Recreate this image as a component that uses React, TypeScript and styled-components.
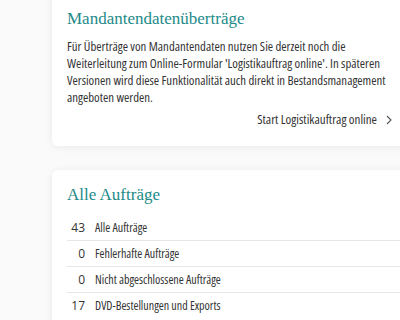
import React from "react";
import styled, { createGlobalStyle } from "styled-components";

const GlobalStyle = createGlobalStyle`
  html, body { margin: 0; padding: 0; background: #fafafa; overflow: hidden; }
  body { font-family: "Open Sans", "Noto Sans", sans-serif; color: #333; }
`;

const Page = styled.main`
  display: flex;
  flex-direction: column;
  gap: 24px;
  padding-left: 52px;
  margin-right: -12px;
  margin-top: -12px;
`;

const Card = styled.section<{ $top: number }>`
  background: #fff;
  border-radius: 6px;
  box-shadow: 0 1px 8px rgba(0, 0, 0, 0.07);
  padding: ${(p) => p.$top}px 20px 18px 15px;
`;

const Title = styled.h2`
  margin: 0;
  font-family: "Liberation Serif", "DejaVu Serif", serif;
  font-weight: normal;
  font-size: 17px;
  line-height: 22px;
  color: #238a89;
`;

const Text = styled.p`
  margin: 8px 0 0;
  font-size: 12.8px;
  font-stretch: 75%;
  line-height: 17px;
  color: #333;
`;

const LinkRow = styled.div`
  display: flex;
  justify-content: flex-end;
  align-items: center;
  gap: 9px;
  margin-top: 5px;
`;

const Link = styled.a`
  font-size: 13px;
  font-stretch: 75%;
  line-height: 17px;
  color: #333;
  text-decoration: none;
`;

const List = styled.ul`
  list-style: none;
  margin: 9px -20px 0 0;
  padding: 0;
`;

const Row = styled.li`
  display: flex;
  align-items: center;
  height: 25px;
  & + & {
    border-top: 1px solid #e6e6e6;
  }
`;

const Count = styled.span`
  width: 18px;
  text-align: right;
  font-size: 12px;
  color: #333;
  flex: none;
`;

const Label = styled.span`
  margin-left: 10px;
  font-size: 12px;
  font-stretch: 75%;
  color: #333;
`;

const Chevron = () => (
  <svg width="6" height="10" viewBox="0 0 6 10" aria-hidden="true">
    <polyline points="1,1 5,5 1,9" fill="none" stroke="#555" strokeWidth="1.1" />
  </svg>
);

const rows = [
  { n: 43, label: "Alle Aufträge" },
  { n: 0, label: "Fehlerhafte Aufträge" },
  { n: 0, label: "Nicht abgeschlossene Aufträge" },
  { n: 17, label: "DVD-Bestellungen und Exports" },
];

export default function App() {
  return (
    <>
      <GlobalStyle />
      <Page>
        <Card $top={20}>
          <Title>Mandantendatenüberträge</Title>
          <Text>
            Für Überträge von Mandantendaten nutzen Sie derzeit noch die Weiterleitung zum
            Online-Formular 'Logistikauftrag online'. In späteren Versionen wird diese
            Funktionalität auch direkt in Bestandsmanagement angeboten werden.
          </Text>
          <LinkRow>
            <Link href="#">Start Logistikauftrag online</Link>
            <Chevron />
          </LinkRow>
        </Card>
        <Card $top={14}>
          <Title>Alle Aufträge</Title>
          <List>
            {rows.map((r) => (
              <Row key={r.label}>
                <Count>{r.n}</Count>
                <Label>{r.label}</Label>
              </Row>
            ))}
          </List>
        </Card>
      </Page>
    </>
  );
}
